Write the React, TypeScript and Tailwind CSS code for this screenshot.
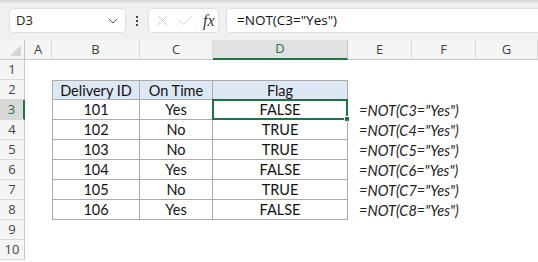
import { ChevronDown, X, Check } from 'lucide-react';

const COLS = ['A', 'B', 'C', 'D', 'E', 'F', 'G'];

const ROWS = [
  { id: '101', onTime: 'Yes', flag: 'FALSE' },
  { id: '102', onTime: 'No', flag: 'TRUE' },
  { id: '103', onTime: 'No', flag: 'TRUE' },
  { id: '104', onTime: 'Yes', flag: 'FALSE' },
  { id: '105', onTime: 'No', flag: 'TRUE' },
  { id: '106', onTime: 'Yes', flag: 'FALSE' },
];

const cell = "font-['Lato',sans-serif] text-[14.5px] text-[#111] leading-none pt-[2px]";
const tb = 'border-[#ababab]';

function RowHead({ n, active }: { n: number; active?: boolean }) {
  return (
    <div
      className={`h-5 flex items-center justify-center border-b border-[#dadada] font-['Open_Sans',sans-serif] text-[13px] ${
        active ? 'bg-[#d9d9d9] text-[#217346] border-r-2 border-r-[#217346]' : 'bg-[#f5f5f5] text-[#444] border-r border-r-[#c8c8c8]'
      }`}
    >
      {n}
    </div>
  );
}

export default function App() {
  return (
    <div className="w-[538px] h-[262px] overflow-hidden bg-white">
      {/* Formula bar */}
      <div className="h-10 bg-[#f0f0f0] relative">
        <div className="h-[3px] bg-gradient-to-b from-[#d6d6d6] to-[#eaeaea]" />
        <div className="flex items-center pt-[5px] h-[30px]">
          <div className="ml-[9px] w-[117px] h-[25px] bg-white rounded-[4px] border border-[#e0e0e0] flex items-center justify-between pl-[6px] pr-[4px]">
            <span className="font-['Open_Sans',sans-serif] text-[13px] text-[#222]">D3</span>
            <ChevronDown className="w-4 h-4 text-[#555]" strokeWidth={1.5} />
          </div>
          <div className="w-[22px] flex flex-col items-center gap-[2px]">
            <span className="w-[2px] h-[2px] bg-[#444]" />
            <span className="w-[2px] h-[2px] bg-[#444]" />
            <span className="w-[2px] h-[2px] bg-[#444]" />
          </div>
          <div className="w-[71px] h-[25px] bg-white rounded-[4px] border border-[#e0e0e0] flex items-center pl-[4px] gap-[4px]">
            <X className="w-[19px] h-[19px] text-[#c8c8c8]" strokeWidth={1.1} />
            <Check className="w-[19px] h-[19px] text-[#c8c8c8]" strokeWidth={1.1} />
            <span className="ml-[4px] font-['Liberation_Serif',serif] italic text-[16px] text-[#333]">fx</span>
          </div>
          <div className="ml-[7px] flex-1 h-[25px] bg-white rounded-l-[4px] border border-r-0 border-[#e0e0e0] flex items-center pl-[10px]">
            <span className="font-['Open_Sans',sans-serif] text-[13.5px] text-[#111]">=NOT(C3="Yes")</span>
          </div>
        </div>
      </div>

      {/* Grid */}
      <div className="grid grid-cols-[25px_27px_88px_73px_135px_64px_64px_1fr] auto-rows-[20px]">
        {/* Column headers */}
        <div className="bg-[#f5f5f5] border-r border-b border-[#c8c8c8] relative overflow-hidden">
          <div className="absolute right-[3px] bottom-[3px] w-0 h-0 border-l-[11px] border-l-transparent border-b-[11px] border-b-[#d4d4d4]" />
        </div>
        {COLS.map((c) => (
          <div
            key={c}
            className={`flex items-center justify-center font-['Open_Sans',sans-serif] text-[13px] ${
              c === 'D'
                ? 'bg-[#e1e1e1] text-[#217346] border-b-2 border-b-[#217346] border-r border-r-[#c8c8c8]'
                : 'bg-[#f5f5f5] text-[#444] border-b border-b-[#c8c8c8] border-r border-r-[#dadada]'
            }`}
          >
            {c}
          </div>
        ))}

        {/* Row 1 */}
        <RowHead n={1} />
        <div className="col-span-7" />

        {/* Row 2 - table header */}
        <RowHead n={2} />
        <div />
        <div className={`bg-[#dde8f5] border ${tb} flex items-center justify-center ${cell}`}>Delivery ID</div>
        <div className={`bg-[#dde8f5] border-t border-r border-b ${tb} flex items-center justify-center ${cell}`}>On Time</div>
        <div className={`bg-[#dde8f5] border-t border-r border-b ${tb} flex items-center justify-center ${cell}`}>Flag</div>
        <div className="col-span-3" />

        {ROWS.map((r, i) => {
          const n = i + 3;
          return [
            <RowHead key={`h${n}`} n={n} active={n === 3} />,
            <div key={`a${n}`} />,
            <div key={`b${n}`} className={`border-l border-r border-b ${tb} flex items-center justify-center ${cell}`}>{r.id}</div>,
            <div key={`c${n}`} className={`border-r border-b ${tb} flex items-center justify-center ${cell}`}>{r.onTime}</div>,
            <div key={`d${n}`} className={`relative border-r border-b ${tb} flex items-center justify-center ${cell}`}>
              {r.flag}
              {n === 3 && (
                <>
                  <div className="absolute -left-[1px] -top-[1px] -right-[1px] -bottom-[1px] border-2 border-[#217346]" />
                  <div className="absolute -right-[3px] -bottom-[3px] w-[6px] h-[6px] bg-[#217346] border border-white" />
                </>
              )}
            </div>,
            <div key={`e${n}`} className="col-span-3 flex items-center pl-[11px] pt-[2px] font-['Lato',sans-serif] italic text-[14.5px] text-[#222] leading-none">
              =NOT(C{n}="Yes")
            </div>,
          ];
        })}

        <RowHead n={9} />
        <div className="col-span-7" />
        <RowHead n={10} />
        <div className="col-span-7" />
      </div>
    </div>
  );
}
